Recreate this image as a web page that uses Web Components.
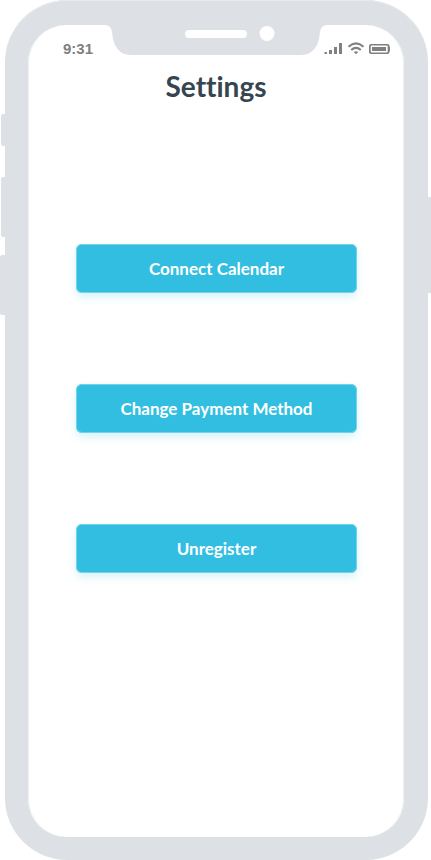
<!DOCTYPE html>
<html lang="en">
<head>
<meta charset="utf-8">
<meta name="viewport" content="width=device-width, initial-scale=1">
<title>Settings</title>
<style>
  body { margin: 0; background: #fff; }
</style>
</head>
<body>
<settings-page></settings-page>

<template id="phone-frame">
  <style>
    :host { box-sizing: border-box; min-height: 100vh; padding: 0 3px 0 5px; overflow: hidden; display: flex; }
    .body { position: relative; flex: 1; display: flex; box-sizing: border-box; padding: 25px 24px 23px 23px; background: #dde1e6; border-radius: 62px; box-shadow: inset 0 1px #e8ebee; }
    .screen { flex: 1; display: flex; flex-direction: column; position: relative; background: #fff; border-radius: 38px; box-shadow: inset 1px 0 #eef0f2, inset -1px 0 #eef0f2; }
    .key { position: absolute; background: #dde1e6; }
    .left { right: 100%; border-radius: 2px 0 0 2px; }
    .right { left: 100%; width: 3px; top: 197px; height: 96px; }
    .mute { top: 114px; height: 32px; width: 4px; }
    .up { top: 177px; height: 60px; width: 4px; }
    .down { top: 255px; height: 60px; width: 5px; }
    .notch { position: absolute; top: 0; left: 50%; margin-left: -112px; display: block; }
  </style>
  <div class="body">
    <span class="key left mute"></span>
    <span class="key left up"></span>
    <span class="key left down"></span>
    <span class="key right"></span>
    <div class="screen">
      <svg class="notch" width="224" height="31" viewBox="0 0 224 31" aria-hidden="true">
        <path fill="#dde1e6" d="M1 0Q7 0 8 7C9 21 15 30 27 30H197C209 30 215 21 216 7Q217 0 223 0Z"/>
        <rect x="81" y="5" width="62" height="8" rx="4" fill="#fff"/>
        <circle cx="163" cy="8.5" r="7.5" fill="#fff"/>
      </svg>
      <slot></slot>
    </div>
  </div>
</template>

<template id="status-bar">
  <style>
    :host { display: flex; justify-content: space-between; align-items: center; padding: 14px 14px 0 35px; height: 20px; color: #808080; font: bold 15px/20px "Liberation Sans", Arial, sans-serif; }
    svg { display: block; }
  </style>
  <time>9:31</time>
  <svg width="66" height="14" viewBox="324 42 66 14" role="img" aria-label="Signal, Wi-Fi and battery">
    <g fill="#808080">
      <path d="M324.5 52h2.5v2h-2.5zM329 50h3v4h-3zM334 47h3v7h-3zM339 43h3v11h-3z"/>
      <path d="M353.800 51.900Q356 50.400 358.200 51.900L356 54.300z"/>
      <path d="M371 44h16.500q2 0 2 2v.7q1 .3 1 1v2.600q0 .7-1 1v.7q0 2-2 2H371q-2 0-2-2v-6q0-2 2-2z"/>
      <rect x="370.700" y="45.500" width="17" height="7" rx="1" fill="#fff"/>
      <rect x="372" y="47" width="14" height="4"/>
    </g>
    <path d="M348.500 46.800Q356 40 363.500 46.800M351.200 50Q356 45.800 360.800 50" fill="none" stroke="#808080" stroke-width="2.100"/>
  </svg>
</template>

<template id="page-title">
  <style>
    :host { display: block; padding-top: 10px; }
    h1 { margin: 0; text-align: center; color: #36454f; font: 700 28px/34px Lato, sans-serif; font-variant-ligatures: none; }
  </style>
  <h1><slot></slot></h1>
</template>

<template id="action-button">
  <style>
    :host { display: block; }
    button { display: block; width: 100%; height: 49px; border: 0; border-radius: 6px; padding: 0 16px; background: #31bee1; box-shadow: inset 0 0 0 1px #74d3ea, 0 4px 8px #31bee133; color: #fff; font: 700 17px/24px Lato, sans-serif; cursor: pointer; }
  </style>
  <button type="button"><slot></slot></button>
</template>

<template id="settings-page">
  <style>
    :host { display: block; }
    main { display: flex; flex-direction: column; flex: 1; }
    nav { display: flex; flex-direction: column; gap: 91px; padding: 141px 47px 92px 48px; }
  </style>
  <phone-frame>
    <status-bar></status-bar>
    <main>
      <page-title>Settings</page-title>
      <nav aria-label="Settings">
        <action-button>Connect Calendar</action-button>
        <action-button>Change Payment Method</action-button>
        <action-button>Unregister</action-button>
      </nav>
    </main>
  </phone-frame>
</template>

<script>
  for (const name of ["phone-frame", "status-bar", "page-title", "action-button", "settings-page"]) {
    customElements.define(name, class extends HTMLElement {
      constructor() {
        super();
        this.attachShadow({ mode: "open" }).append(document.getElementById(name).content.cloneNode(true));
      }
    });
  }
</script>
</body>
</html>
